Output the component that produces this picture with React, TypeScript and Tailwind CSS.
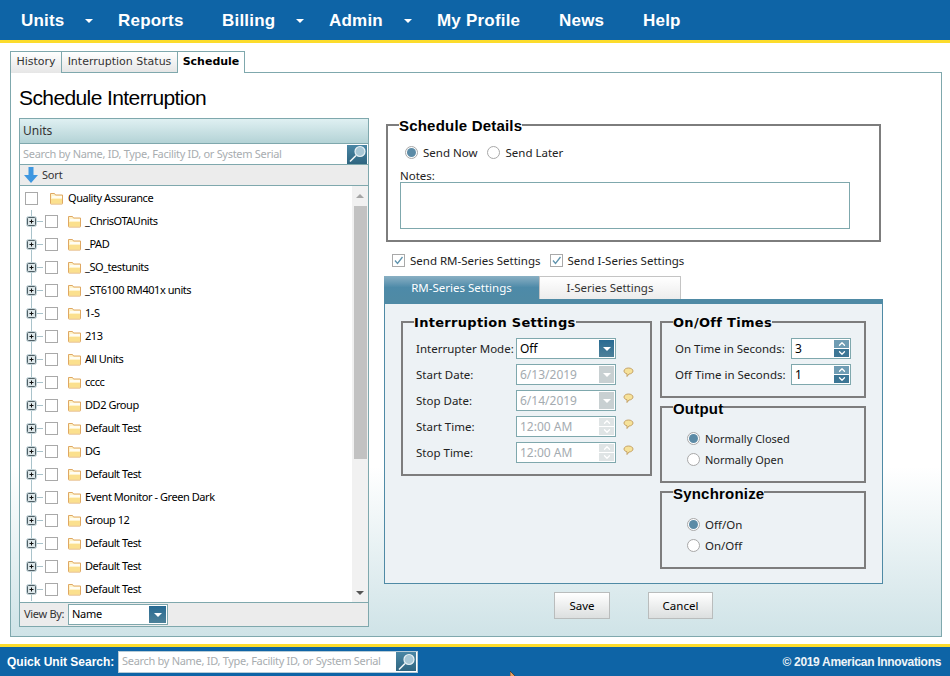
import type { ReactNode } from 'react'
import { ChevronDown, ChevronUp } from 'lucide-react'

const verdana = 'font-["DejaVu_Sans",sans-serif]'
const noto = 'font-["Noto_Sans",sans-serif]'
const arial = 'font-["Liberation_Sans",Arial,sans-serif]'

const navItems = [
    { label: 'Units', width: 'w-[97px]', caret: true },
    { label: 'Reports', width: 'w-[104px]', caret: false },
    { label: 'Billing', width: 'w-[107px]', caret: true },
    { label: 'Admin', width: 'w-[108px]', caret: true },
    { label: 'My Profile', width: 'w-[122px]', caret: false },
    { label: 'News', width: 'w-[84px]', caret: false },
    { label: 'Help', width: 'w-[60px]', caret: false },
]

const units = [
    { name: '_ChrisOTAUnits' },
    { name: '_PAD' },
    { name: '_SO_testunits' },
    { name: '_ST6100 RM401x units' },
    { name: '1-S' },
    { name: '213' },
    { name: 'All Units' },
    { name: 'cccc' },
    { name: 'DD2 Group' },
    { name: 'Default Test' },
    { name: 'DG' },
    { name: 'Default Test' },
    { name: 'Event Monitor - Green Dark' },
    { name: 'Group 12' },
    { name: 'Default Test', label: 'ml-[2px]' },
    { name: 'Default Test', label: 'ml-[1px]' },
    { name: 'Default Test', label: 'ml-[1px]' },
]

function Folder({ className = '' }: { className?: string }) {
    return (
        <svg width="15" height="13" viewBox="0 0 15 13" className={className}>
            <path d="M1.500 1.500h4l1 1.500h7v8.500a.5.5 0 0 1-.5.5H2a.5.5 0 0 1-.5-.5z" fill="#fff3c9" stroke="#dfa863" />
            <rect x="3" y="4" width="10" height="2" fill="#fffdf2" />
            <rect x="2" y="7" width="11" height="4.500" fill="#fbe08e" />
        </svg>
    )
}

function Check({ on = false, className = '' }: { on?: boolean; className?: string }) {
    return (
        <span className={`inline-flex h-[13px] w-[13px] shrink-0 items-center justify-center border border-[#a9a9a9] bg-white ${className}`}>
            {on && (
                <svg width="11" height="11" viewBox="0 0 11 11">
                    <path d="M2 5.500l2.500 3L9.500 2" fill="none" stroke="#5f93ad" strokeWidth="1.3" />
                </svg>
            )}
        </span>
    )
}

function Radio({ on = false }: { on?: boolean }) {
    return (
        <span className="inline-flex h-[13px] w-[13px] shrink-0 items-center justify-center rounded-full border border-[#a8a8a8] bg-white">
            {on && <span className="h-[9px] w-[9px] rounded-full bg-[#5c8ba6]" />}
        </span>
    )
}

function Expander() {
    return (
        <svg width="24" height="23" viewBox="0 0 24 23" className="shrink-0">
            <path d="M10.500 0v23M15 11.500h7" stroke="#a9c3cb" fill="none" />
            <rect x="5.500" y="6.500" width="10" height="10" rx="2" fill="#dbe6e9" stroke="#c3d3d8" />
            <rect x="6.500" y="7.500" width="8" height="8" rx="1" fill="#dbe6e9" stroke="#4f5f65" />
            <path d="M8.500 11.500h4M10.500 9.500v4" stroke="#111" fill="none" />
        </svg>
    )
}

function Magnifier() {
    return (
        <span className="flex h-[19px] w-[20px] shrink-0 items-center justify-center bg-gradient-to-b from-[#4a87a5] to-[#2f6580]">
            <svg width="19" height="18" viewBox="0 0 19 18">
                <circle cx="12" cy="6.500" r="5" fill="#a9c8d6" stroke="#e8f1f5" strokeWidth="1.2" />
                <path d="M8 10.500l-6 6" stroke="#f4f7f8" strokeWidth="1.600" />
            </svg>
        </span>
    )
}

function Caret({ disabled = false, className = '' }: { disabled?: boolean; className?: string }) {
    return (
        <span
            className={`flex items-center justify-center bg-gradient-to-b ${
                disabled ? 'from-[#c8d0d2] to-[#c8d0d2]' : 'from-[#276a92] to-[#4d8199]'
            } ${className}`}
        >
            <span className="h-0 w-0 border-x-[4px] border-t-[4px] border-x-transparent border-t-white" />
        </span>
    )
}

function Bubble() {
    return (
        <svg width="11" height="11" viewBox="0 0 11 11" className="mt-[-4px] shrink-0">
            <path d="M5.500 1C8 1 10 2.300 10 4s-2 3-4 3L4 9.500V6.800C2.200 6.400 1 5.300 1 4c0-1.700 2-3 4.500-3z" fill="#f6e29a" stroke="#c09a5c" strokeWidth="0.9" />
        </svg>
    )
}

function Spinner({ disabled = false }: { disabled?: boolean }) {
    const up = disabled ? 'bg-[#dfe4e5]' : 'bg-[#6f9cb3]'
    const down = disabled ? 'bg-[#dfe4e5]' : 'bg-[#3c7695]'
    const arrow = 'text-white'
    return (
        <span className="flex w-[15px] flex-col gap-[1px]">
            <span className={`flex h-[8px] items-center justify-center ${up}`}>
                <ChevronUp size={10} strokeWidth={3} className={arrow} />
            </span>
            <span className={`flex h-[8px] items-center justify-center ${down}`}>
                <ChevronDown size={10} strokeWidth={3} className={arrow} />
            </span>
        </span>
    )
}

function Field({ value, disabled = false, trail, width = 'w-[100px]' }: { value: string; disabled?: boolean; trail: ReactNode; width?: string }) {
    return (
        <span className={`flex h-[21px] shrink-0 items-center justify-between border border-[#7fa8ad] bg-white pl-[3px] pr-[1px] ${width}`}>
            <span className={`pt-[1px] text-[12px] ${disabled ? 'text-[#a4abb0]' : 'text-black'}`}>{value}</span>
            {trail}
        </span>
    )
}

function Box({ title, className = '', titleClass = '', children }: { title: string; className?: string; titleClass?: string; children: ReactNode }) {
    return (
        <fieldset className={`min-w-0 border-2 border-[#7d7d7d] ${className}`}>
            <legend className={`ml-[11px] font-bold leading-[15px] text-black ${titleClass}`}>{title}</legend>
            {children}
        </fieldset>
    )
}

function Option({ on = false, label, size = 'text-[11.5px]' }: { on?: boolean; label: string; size?: string }) {
    return (
        <label className={`flex items-center gap-[5px] leading-[13px] text-[#222] ${size}`}>
            <Radio on={on} />
            {label}
        </label>
    )
}

function UnitsPanel() {
    return (
        <section className="flex h-[509px] w-[350px] shrink-0 flex-col border border-[#7fa8ad] bg-white">
            <div className="flex h-[24px] items-center bg-gradient-to-b from-[#dff0f2] to-[#b4d3d6] px-[3px] text-[12px] text-[#333]">Units</div>
            <div className="flex h-[22px] items-center justify-between border-y border-[#7fa8ad] pl-[3px] pr-[1px]">
                <span className="whitespace-nowrap text-[11px] tracking-[-0.3px] text-[#a8adb0]">Search by Name, ID, Type, Facility ID, or System Serial</span>
                <Magnifier />
            </div>
            <div className="flex h-[21px] items-center gap-[4px] border-b border-[#7fa8ad] bg-[#ececec] pl-[4px] text-[11px] tracking-[-0.2px] text-[#333]">
                <svg width="14" height="16" viewBox="0 0 14 16">
                    <path d="M4.500 0h5v8H14l-7 8-7-8h4.500z" fill="#3f97e0" />
                </svg>
                Sort
            </div>
            <div className="flex min-h-0 flex-1">
                <div className="min-w-0 flex-1 overflow-hidden pt-[1px]">
                    <div className="flex h-[23px] items-center pl-[5px]">
                        <Check />
                        <Folder className="ml-[11px] shrink-0" />
                        <span className="ml-[4px] text-[11px] tracking-[-0.45px] text-black">Quality Assurance</span>
                    </div>
                    {units.map((unit, i) => (
                        <div key={i} className="flex h-[23px] items-center pl-[1px]">
                            <Expander />
                            <Check />
                            <Folder className="ml-[9px] shrink-0" />
                            <span className={`ml-[3px] text-[11px] tracking-[-0.45px] text-black ${unit.label ?? ''}`}>{unit.name}</span>
                        </div>
                    ))}
                </div>
                <div className="flex w-[16px] shrink-0 flex-col items-center bg-[#f1f1f1]">
                    <span className="mt-[8px] h-0 w-0 border-x-[4px] border-b-[4px] border-x-transparent border-b-[#a5a5a5]" />
                    <span className="mt-[8px] h-[253px] w-[13px] bg-[#c2c2c2]" />
                    <span className="mt-auto mb-[7px] h-0 w-0 border-x-[4px] border-t-[4px] border-x-transparent border-t-[#555]" />
                </div>
            </div>
            <div className="flex h-[24px] items-center border-t border-[#7fa8ad] bg-[#ececec] pl-[4px] text-[11px] tracking-[-0.3px] text-[#333]">
                <span className="w-[44px] whitespace-nowrap">View By:</span>
                <span className="flex h-[21px] w-[100px] items-center justify-between border border-[#7fa8ad] bg-white pl-[3px] pr-[1px] text-black">
                    Name
                    <Caret className="h-[17px] w-[17px]" />
                </span>
            </div>
        </section>
    )
}

function SettingsPanel() {
    const disabledRows = [
        { label: 'Start Date:', value: '6/13/2019', spin: false },
        { label: 'Stop Date:', value: '6/14/2019', spin: false },
        { label: 'Start Time:', value: '12:00 AM', spin: true },
        { label: 'Stop Time:', value: '12:00 AM', spin: true },
    ]
    return (
        <div className="mt-[9px] ml-[-2px] w-[499px]">
            <div className="flex h-[23px]">
                <span className="flex w-[155px] items-center justify-center bg-gradient-to-b from-[#8ab0c4] via-[#4d8aa8] to-[#4f8aa5] text-[11.5px] text-white">RM-Series Settings</span>
                <span className="flex w-[142px] items-center justify-center border border-b-0 border-[#c4c4c4] bg-gradient-to-b from-white to-[#ececec] text-[11.5px] text-[#333]">I-Series Settings</span>
            </div>
            <div className="flex h-[285px] gap-[8px] border border-t-[5px] border-[#4f8aa5] bg-[#edf2f5] pl-[16px] pt-[10px]">
                <Box title="Interruption Settings" className="h-[162px] w-[251px]" titleClass={`translate-y-[1px] text-[13px] tracking-[0.3px] ${verdana}`}>
                    <div className="flex flex-col gap-[5px] pl-[13px] pt-[9px]">
                        <div className="flex items-center text-[11.5px] text-[#222]">
                            <span className="w-[100px] whitespace-nowrap">Interrupter Mode:</span>
                            <Field value="Off" trail={<Caret className="h-[17px] w-[15px]" />} />
                        </div>
                        {disabledRows.map((row) => (
                            <div key={row.label} className="flex items-center text-[11.5px] text-[#222]">
                                <span className="w-[100px] whitespace-nowrap">{row.label}</span>
                                <Field value={row.value} disabled trail={row.spin ? <Spinner disabled /> : <Caret disabled className="h-[17px] w-[15px]" />} />
                                <span className="ml-[7px] flex">
                                    <Bubble />
                                </span>
                            </div>
                        ))}
                    </div>
                </Box>
                <div className="flex w-[206px] flex-col gap-[1px]">
                    <Box title="On/Off Times" className="h-[84px]" titleClass={`translate-y-[1px] text-[13px] tracking-[0.3px] ${verdana}`}>
                        <div className="flex flex-col gap-[5px] pl-[13px] pt-[9px]">
                            <div className="flex items-center text-[11.5px] text-[#222]">
                                <span className="w-[116px] whitespace-nowrap">On Time in Seconds:</span>
                                <Field value="3" width="w-[60px]" trail={<Spinner />} />
                            </div>
                            <div className="flex items-center text-[11.5px] text-[#222]">
                                <span className="w-[116px] whitespace-nowrap">Off Time in Seconds:</span>
                                <Field value="1" width="w-[60px]" trail={<Spinner />} />
                            </div>
                        </div>
                    </Box>
                    <Box title="Output" className="h-[84px]" titleClass={`translate-y-[2px] text-[15px] tracking-[0.2px] ${arial}`}>
                        <div className="flex flex-col gap-[8px] pl-[25px] pt-[18px]">
                            <Option on label="Normally Closed" size="text-[11px]" />
                            <Option label="Normally Open" size="text-[11px]" />
                        </div>
                    </Box>
                    <Box title="Synchronize" className="h-[85px]" titleClass={`translate-y-[2px] text-[15px] tracking-[0.2px] ${arial}`}>
                        <div className="flex flex-col gap-[8px] pl-[25px] pt-[19px]">
                            <Option on label="Off/On" />
                            <Option label="On/Off" />
                        </div>
                    </Box>
                </div>
            </div>
        </div>
    )
}

function SchedulePanel() {
    return (
        <div className="flex flex-1 flex-col pl-[8px] pt-[7px]">
            <h1 className={`h-[38px] text-[21px] leading-[35px] tracking-[-0.6px] text-black ${arial}`}>Schedule Interruption</h1>
            <div className="flex">
                <UnitsPanel />
                <div className="ml-[17px] flex w-[498px] flex-col">
                    <Box title="Schedule Details" className="mt-[-1px] h-[125px] w-[495px]" titleClass={`translate-y-[1px] text-[15px] tracking-[0.2px] ${arial}`}>
                        <div className="flex items-center gap-[10px] pl-[17px] pt-[14px]">
                            <Option on label="Send Now" />
                            <Option label="Send Later" />
                        </div>
                        <div className="pl-[12px] pt-[10px] text-[11.5px] leading-[13px] text-[#222]">Notes:</div>
                        <div className="ml-[12px] h-[47px] w-[450px] border border-[#7fa8ad] bg-white" />
                    </Box>
                    <div className="mt-[12px] flex h-[13px] items-center pl-[6px] text-[11.5px] text-[#222]">
                        <Check on />
                        <span className="ml-[5px]">Send RM-Series Settings</span>
                        <Check on className="ml-[9px]" />
                        <span className="ml-[5px]">Send I-Series Settings</span>
                    </div>
                    <SettingsPanel />
                    <div className="mt-[8px] flex">
                        <button className="ml-[168px] h-[27px] w-[56px] border border-[#b9bcbc] bg-gradient-to-b from-white to-[#dcdfdf] text-[11.5px] text-black">Save</button>
                        <button className="ml-[38px] h-[27px] w-[65px] border border-[#b9bcbc] bg-gradient-to-b from-white to-[#dcdfdf] text-[11.5px] text-black">Cancel</button>
                    </div>
                </div>
            </div>
        </div>
    )
}

export default function App() {
    return (
        <div className={`relative flex h-[676px] w-[950px] flex-col overflow-hidden bg-white ${noto} text-[12px]`}>
            <header className={`flex h-[43px] shrink-0 items-center border-b-[3px] border-[#fcdc2c] bg-[#0e64a6] pl-[21px] pt-[1px] ${arial}`}>
                {navItems.map((item) => (
                    <div key={item.label} className={`flex items-center text-[17px] font-bold tracking-[0.2px] text-white ${item.width}`}>
                        {item.label}
                        {item.caret && <span className="ml-auto mr-[25px] h-0 w-0 border-x-[4px] border-t-[4px] border-x-transparent border-t-white" />}
                    </div>
                ))}
            </header>

            <main className="ml-[10px] mt-[8px] flex h-[586px] w-[932px] flex-col">
                <div className={`flex h-[22px] shrink-0 items-stretch text-[11px] ${verdana}`}>
                    <span className="flex w-[52px] items-center justify-center border border-b-0 border-[#7fa8ad] bg-gradient-to-b from-white to-[#e6e6e6] text-[#333]">History</span>
                    <span className="flex w-[116px] items-center justify-center border-y border-r border-[#7fa8ad] bg-gradient-to-b from-white to-[#e6e6e6] text-[#333]">Interruption Status</span>
                    <span className="flex w-[67px] items-center justify-center border-t border-r border-[#7fa8ad] bg-white font-bold text-black">Schedule</span>
                    <span className="flex-1 border-b border-[#7fa8ad]" />
                </div>
                <div className="flex h-[564px] flex-col border border-t-0 border-[#7fa8ad] bg-gradient-to-b from-white from-[70%] to-[#cfe3e7]">
                    <SchedulePanel />
                </div>
            </main>

            <footer className={`mt-auto flex h-[32px] shrink-0 items-center justify-between border-t-[3px] border-[#fcdc2c] bg-[#0e64a6] pl-[7px] pr-[9px] ${arial}`}>
                <div className="flex items-center gap-[4px]">
                    <span className="w-[107px] whitespace-nowrap text-[12px] font-bold text-white">Quick Unit Search:</span>
                    <div className={`flex h-[22px] w-[300px] items-center justify-between border border-[#b7cbd6] bg-white pl-[3px] pr-[1px] ${noto}`}>
                        <span className="whitespace-nowrap text-[11px] tracking-[-0.3px] text-[#a8adb0]">Search by Name, ID, Type, Facility ID, or System Serial</span>
                        <Magnifier />
                    </div>
                </div>
                <span className="text-[12px] font-bold tracking-[-0.32px] text-[#eef4f8]">© 2019 American Innovations</span>
            </footer>

            <svg width="8" height="6" viewBox="0 0 8 6" className="absolute left-[510px] top-[671px]">
                <path d="M0 0l6 6H0z" fill="#e8a060" stroke="#222" strokeWidth="0.6" />
            </svg>
        </div>
    )
}
